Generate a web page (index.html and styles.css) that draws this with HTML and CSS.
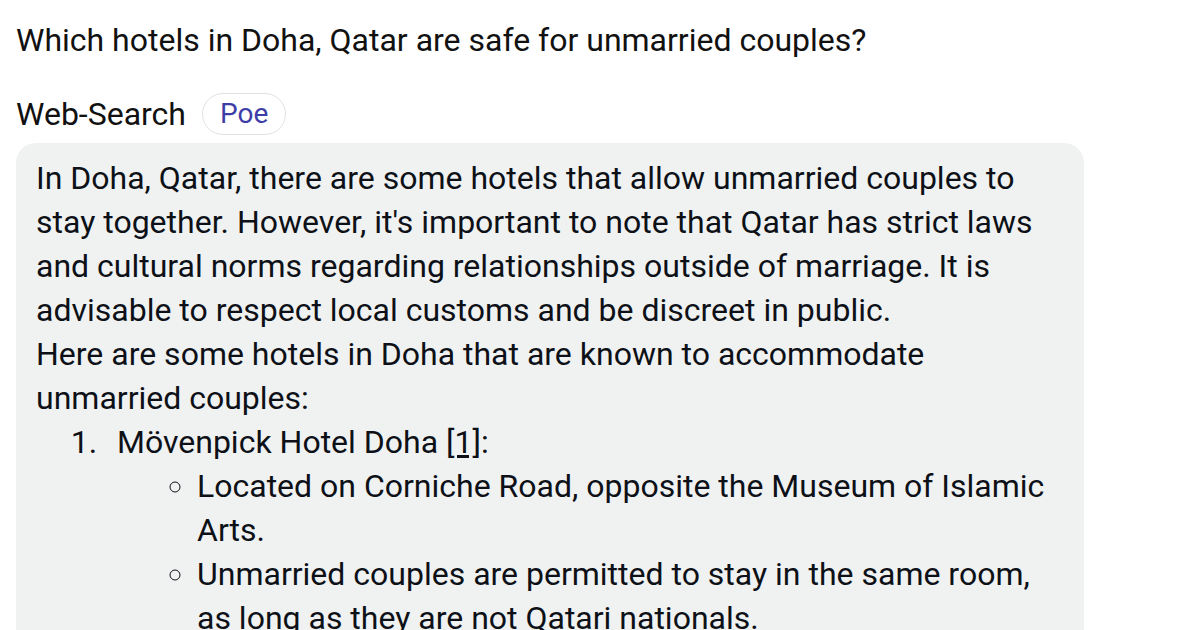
FILE: index.html
```html
<!DOCTYPE html>
<html lang="en">
<head>
    <meta charset="UTF-8">
    <meta name="viewport" content="width=device-width, initial-scale=1.0">
    <title>Web-Search</title>
    <link rel="stylesheet" href="styles.css">
</head>
<body>
    <div class="chat">
        <p class="question">Which hotels in Doha, Qatar are safe for unmarried couples?</p>

        <div class="bot-header">
            <span class="bot-name">Web-Search</span>
            <span class="bot-tag">Poe</span>
        </div>

        <div class="bubble">
            <p>In Doha, Qatar, there are some hotels that allow unmarried couples to stay together. However, it's important to note that Qatar has strict laws and cultural norms regarding relationships outside of marriage. It is advisable to respect local customs and be discreet in public.</p>
            <p>Here are some hotels in Doha that are known to accommodate unmarried couples:</p>
            <ol>
                <li>Mövenpick Hotel Doha <a href="#">[1]</a>:
                    <ul>
                        <li>Located on Corniche Road, opposite the Museum of Islamic Arts.</li>
                        <li>Unmarried couples are permitted to stay in the same room, as long as they are not Qatari nationals.</li>
                    </ul>
                </li>
            </ol>
        </div>
    </div>
</body>
</html>
```

FILE: styles.css
```css
body {
    margin: 0;
    background: #ffffff;
    font-family: Roboto, "Noto Sans", Arial, sans-serif;
    color: #0d1117;
}
.chat {
    padding: 0 16px;
    width: 1068px;
}
.question {
    margin: 0;
    padding-top: 20px;
    font-size: 32px;
    line-height: 40px;
    color: #111111;
}
.bot-header {
    display: flex;
    align-items: center;
    gap: 16px;
    margin-top: 33px;
    margin-bottom: 8px;
}
.bot-name {
    font-size: 32px;
    color: #111111;
}
.bot-tag {
    font-size: 28px;
    color: #3d3da8;
    border: 1.5px solid #dfe2e4;
    border-radius: 22px;
    padding: 5px 17px;
    line-height: 30px;
}
.bubble {
    background: #f0f2f2;
    border-radius: 20px;
    padding: 13px 20px;
    font-size: 32px;
    line-height: 44px;
}
.bubble p {
    margin: 0;
}
.bubble ol {
    margin: 0;
    padding-left: 69px;
}
.bubble ol > li {
    padding-left: 12px;
}
.bubble ul {
    margin: 0;
    padding-left: 80px;
    list-style: circle;
}
.bubble a {
    color: inherit;
    text-decoration: underline;
}
```
